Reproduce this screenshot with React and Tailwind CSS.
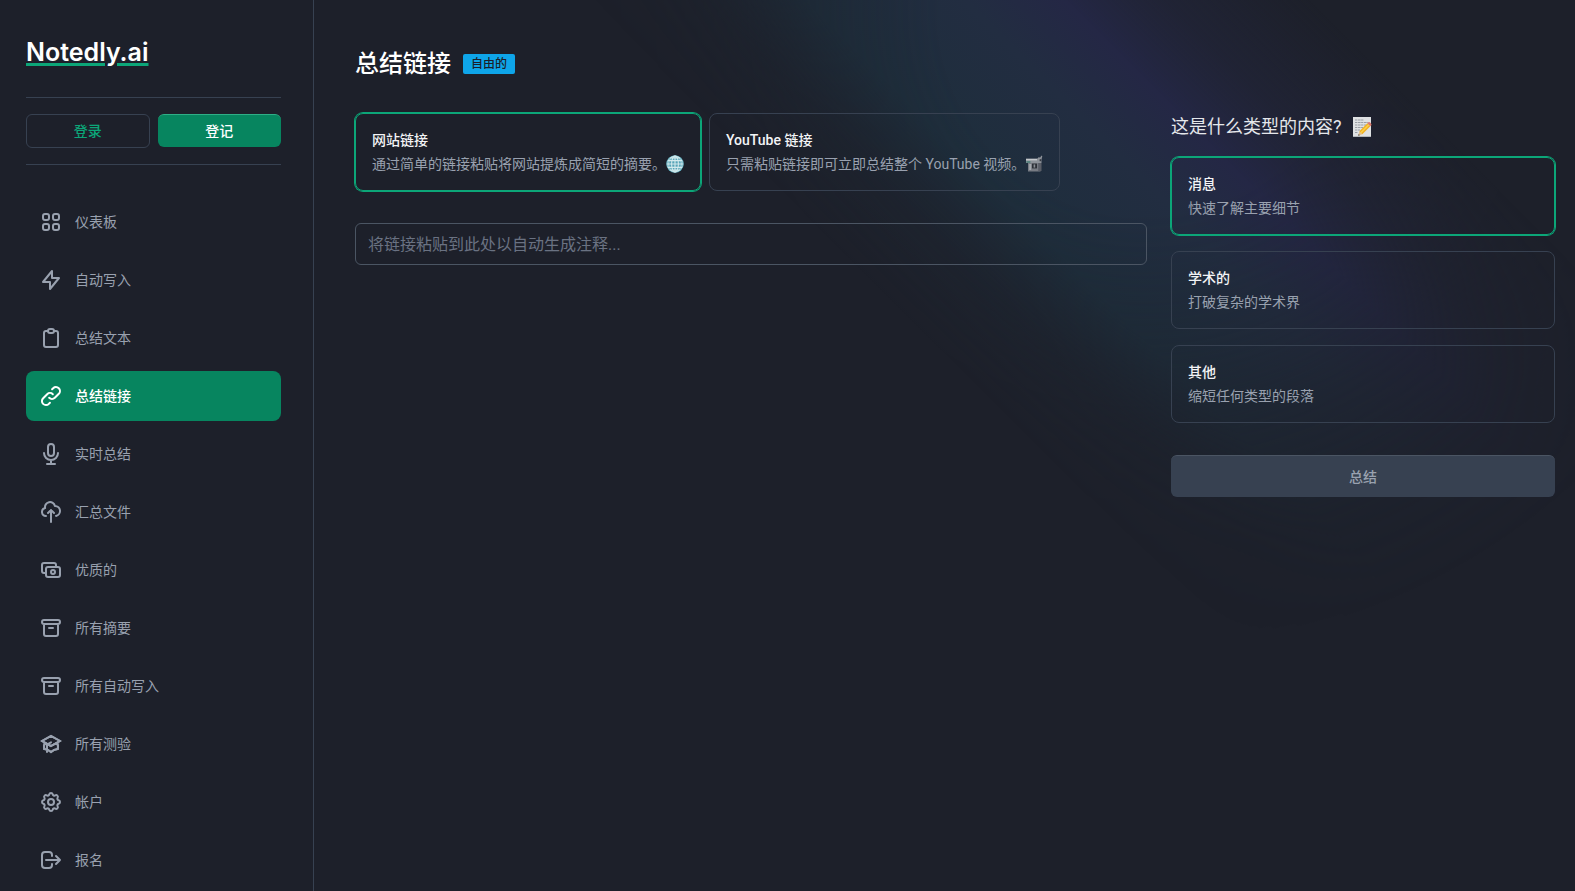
import React from "react";
import {
  HiOutlineViewGrid,
  HiOutlineLightningBolt,
  HiOutlineClipboard,
  HiOutlineLink,
  HiOutlineMicrophone,
  HiOutlineCloudUpload,
  HiOutlineCash,
  HiOutlineArchive,
  HiOutlineAcademicCap,
  HiOutlineCog,
  HiOutlineLogout,
} from "react-icons/hi";

const NAV = [
  { label: "仪表板", Icon: HiOutlineViewGrid },
  { label: "自动写入", Icon: HiOutlineLightningBolt },
  { label: "总结文本", Icon: HiOutlineClipboard },
  { label: "总结链接", Icon: HiOutlineLink, active: true },
  { label: "实时总结", Icon: HiOutlineMicrophone },
  { label: "汇总文件", Icon: HiOutlineCloudUpload },
  { label: "优质的", Icon: HiOutlineCash },
  { label: "所有摘要", Icon: HiOutlineArchive },
  { label: "所有自动写入", Icon: HiOutlineArchive },
  { label: "所有测验", Icon: HiOutlineAcademicCap },
  { label: "帐户", Icon: HiOutlineCog },
  { label: "报名", Icon: HiOutlineLogout },
];

function Globe() {
  return (
    <svg viewBox="0 0 18 18" className="size-[18px] shrink-0" aria-hidden="true">
      <circle cx="9" cy="9" r="8.7" fill="#58a5b8" />
      <g fill="none" stroke="#d3eaed" strokeWidth="1.1">
        <circle cx="9" cy="9" r="8" strokeWidth="0.8" stroke="#9fd0da" />
        <ellipse cx="9" cy="9" rx="3.4" ry="8" />
        <ellipse cx="9" cy="9" rx="6.4" ry="8" strokeWidth="0.7" />
        <path d="M9 1v16M1 9h16M2 5.6h14M2 12.4h14M4.3 2.9h9.4M4.3 15.1h9.4" />
      </g>
    </svg>
  );
}

function Camera() {
  return (
    <svg viewBox="0 0 18 18" className="size-[18px] shrink-0" aria-hidden="true">
      <path d="M1 3.5h11.5l1-1.2 1.6.2 1.4-1.9.8.6-.8 3.3v3.6H1z" fill="#8d9299" />
      <path d="M1 4h11v1.4H1z" fill="#c3c7cb" />
      <path d="M1.4 6.2h4v1.6h-4z" fill="#4d7f78" />
      <path d="M3 8h12.5v8.5H3z" fill="#777b83" />
      <path d="M4.2 9h2v6h-2z" fill="#a5a9ae" />
      <path d="M7 8.6h5v4.8H7z" fill="#2c3037" />
      <path d="M8.6 9.4h1.6v3.2H8.6z" fill="#8a8e95" />
      <path d="M13.2 8h3.3v8h-3.3z" fill="#5a5e67" />
      <path d="M14.6 4.2h1.6v2h-1.6z" fill="#353941" />
    </svg>
  );
}

function Memo() {
  return (
    <svg viewBox="0 0 20 22" className="h-[22px] w-5 shrink-0" aria-hidden="true">
      <path d="M1 1h18v20H1z" fill="#dfe1e3" />
      <path d="M1 20h18v1H1z" fill="#b4b7bb" />
      <path
        d="M3 4h9M3 6.5h13M3 9h11M3 11.5h8M3 14h5M3 16.5h3"
        stroke="#9a9ea5"
        strokeWidth="1"
        strokeDasharray="2 .6 3 .5"
      />
      <path d="M6.2 19.8l1.2-4.6 2.9 3.1z" fill="#e6c08c" />
      <path d="M6.2 19.8l.5-1.8 1.2 1.2z" fill="#3d3d3d" />
      <path d="M7.4 15.2l8-8 2.9 3.1-8 8z" fill="#f2b01f" />
      <path d="M8.3 16.2l8-8 1 1-8 8z" fill="#fbd04c" />
      <path d="M15.4 7.2l1.2-1.2c.9-.6 3.2 1.6 2.9 3.1l-1.2 1.2z" fill="#d9776b" />
    </svg>
  );
}

function Glow() {
  return (
    <svg
      className="pointer-events-none absolute top-0 right-0"
      width="1000"
      height="760"
      viewBox="0 0 1000 760"
      aria-hidden="true"
    >
      <defs>
        <linearGradient id="band" gradientUnits="userSpaceOnUse" x1="15" y1="0" x2="375" y2="-360">
          <stop offset="0" stopColor="#1e2d3b" stopOpacity="0" />
          <stop offset="0.16" stopColor="#1e2d3b" stopOpacity="0.35" />
          <stop offset="0.3" stopColor="#1e2e3c" />
          <stop offset="0.52" stopColor="#222d41" />
          <stop offset="0.66" stopColor="#242745" />
          <stop offset="0.8" stopColor="#242740" stopOpacity="0.5" />
          <stop offset="1" stopColor="#242740" stopOpacity="0" />
        </linearGradient>
        <radialGradient id="fade" gradientUnits="userSpaceOnUse" cx="570" cy="10" r="640">
          <stop offset="0" stopColor="#fff" />
          <stop offset="0.32" stopColor="#fff" />
          <stop offset="0.52" stopColor="#fff" stopOpacity="0.7" />
          <stop offset="0.68" stopColor="#fff" stopOpacity="0.38" />
          <stop offset="0.85" stopColor="#fff" stopOpacity="0.12" />
          <stop offset="1" stopColor="#fff" stopOpacity="0" />
        </radialGradient>
        <mask id="fadeMask">
          <rect width="1000" height="760" fill="url(#fade)" />
        </mask>
      </defs>
      <rect width="1000" height="760" fill="url(#band)" mask="url(#fadeMask)" />
    </svg>
  );
}

function OptionCard({ title, description, icon, selected }) {
  return (
    <button
      type="button"
      aria-pressed={Boolean(selected)}
      className={
        "flex flex-col gap-1 rounded-lg border p-4 text-left text-sm leading-5 " +
        (selected ? "border-[#0ca678] ring-1 ring-[#0ca678]" : "border-[#374151]")
      }
    >
      <span className="font-medium text-gray-100">{title}</span>
      <span className="flex h-5 items-center text-gray-400">
        {description}
        {icon}
      </span>
    </button>
  );
}

function Sidebar() {
  return (
    <aside className="w-[314px] shrink-0 border-r border-[#374151] pt-9 pr-8 pl-[26px]">
      <a
        href="#"
        className="block font-['Inter',sans-serif] text-[25px] leading-8 font-semibold text-white underline decoration-[#0ca678] decoration-3 underline-offset-2"
      >
        Notedly.ai
      </a>
      <div className="mt-[29px] grid grid-cols-2 gap-2 border-y border-[#374151] py-4">
        <button
          type="button"
          className="h-[34px] rounded-md border border-[#374151] text-sm leading-5 font-medium text-[#0ca678]"
        >
          登录
        </button>
        <button
          type="button"
          className="h-[33px] rounded-md border-t border-[#2fae86] bg-[#07855f] text-sm leading-5 font-medium text-white"
        >
          登记
        </button>
      </div>
      <nav className="mt-8 flex flex-col gap-2">
        {NAV.map(({ label, Icon, active }) => (
          <a
            key={label}
            href="#"
            aria-current={active ? "page" : undefined}
            className={
              "flex h-[50px] items-center gap-3 rounded-lg px-[13px] text-sm leading-5 " +
              (active ? "bg-[#07855f] font-medium text-white" : "text-gray-400")
            }
          >
            <Icon className="size-6" />
            <span>{label}</span>
          </a>
        ))}
      </nav>
    </aside>
  );
}

export default function App() {
  return (
    <div className="flex min-h-screen bg-[#1d202a] font-['Roboto','Noto_Sans_CJK_SC',sans-serif]" lang="zh-CN">
      <Sidebar />
      <main className="relative min-w-0 flex-1">
        <Glow />
        <div className="relative pt-12 pr-5 pl-[41px]">
          <header className="flex h-8 items-center gap-3">
            <h1 className="text-2xl leading-8 font-medium text-white">总结链接</h1>
            <span className="rounded-xs bg-[#0ea5e9] px-2 py-0.5 text-xs leading-4 font-medium text-[#1c1f29]">
              自由的
            </span>
          </header>
          <div className="mt-[33px] flex gap-6">
            <section className="min-w-0 flex-1">
              <div className="flex gap-2">
                <OptionCard
                  selected
                  title="网站链接"
                  description="通过简单的链接粘贴将网站提炼成简短的摘要。"
                  icon={<Globe />}
                />
                <OptionCard
                  title="YouTube 链接"
                  description="只需粘贴链接即可立即总结整个 YouTube 视频。"
                  icon={<Camera />}
                />
              </div>
              <input
                type="url"
                aria-label="链接"
                placeholder="将链接粘贴到此处以自动生成注释..."
                className="mt-8 block h-[42px] w-full rounded-md border border-[#4b5563] bg-transparent px-3 text-base text-gray-100 placeholder:text-gray-500"
              />
            </section>
            <section className="flex w-96 shrink-0 flex-col gap-4">
              <h2 className="flex h-7 items-center gap-2.5 text-lg leading-7 text-gray-200">
                这是什么类型的内容?
                <Memo />
              </h2>
              <OptionCard selected title="消息" description="快速了解主要细节" />
              <OptionCard title="学术的" description="打破复杂的学术界" />
              <OptionCard title="其他" description="缩短任何类型的段落" />
              <button
                type="button"
                className="mt-4 h-[42px] rounded-md border-t border-[#4b5563] bg-[#374151] text-sm leading-5 font-medium text-gray-400"
              >
                总结
              </button>
            </section>
          </div>
        </div>
      </main>
    </div>
  );
}
